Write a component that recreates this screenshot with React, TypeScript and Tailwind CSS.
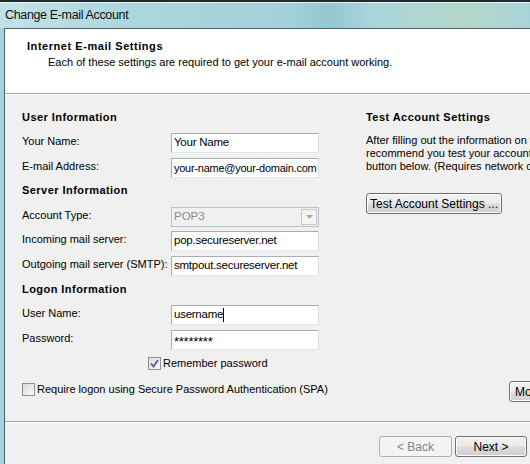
import { ReactNode } from "react";

const font = "font-['Liberation_Sans',Arial,sans-serif]";

function Field({ label, children, className = "" }: { label: string; children: ReactNode; className?: string }) {
  return (
    <div className={`flex items-center h-[20px] ${className}`}>
      <span className="w-[149px] shrink-0 pb-[4px] text-[11px] leading-[14px]">{label}</span>
      {children}
    </div>
  );
}

function TextBox({ value, caret, className = "" }: { value: string; caret?: boolean; className?: string }) {
  return (
    <div
      className={`w-[148px] h-[20px] shrink-0 bg-white border border-[#abadb3] border-b-[#e3e9ef] border-r-[#dbdfe6] flex items-center px-[2px] text-[11.5px] tracking-[-0.25px] overflow-hidden whitespace-nowrap ${className}`}
    >
      {value}
      {caret && <span className="inline-block w-px h-[14px] bg-black" />}
    </div>
  );
}

function SectionTitle({ children, className = "" }: { children: ReactNode; className?: string }) {
  return <div className={`h-[14px] text-[11px] leading-[14px] font-bold tracking-[0.45px] whitespace-nowrap ${className}`}>{children}</div>;
}

function CheckBox({ checked }: { checked?: boolean }) {
  return (
    <span className="w-[13px] h-[13px] border border-[#8e8f8f] bg-gradient-to-br from-[#dcdcdc] to-[#f8f8f8] flex items-center justify-center shrink-0">
      {checked && (
        <svg width="9" height="9" viewBox="0 0 9 9">
          <path d="M1 4.5 L3.5 7.5 L8 1" fill="none" stroke="#4a5f97" strokeWidth="1.8" />
        </svg>
      )}
    </span>
  );
}

function Button({ children, className = "" }: { children: ReactNode; className?: string }) {
  return (
    <div
      className={`h-[21px] shrink-0 rounded-[3px] border border-[#707070] bg-[linear-gradient(#f2f2f2_0%,#ebebeb_48%,#dddddd_52%,#cfcfcf_100%)] flex items-center justify-center text-[12px] shadow-[inset_0_0_0_1px_#fcfcfc] whitespace-nowrap ${className}`}
    >
      {children}
    </div>
  );
}

export default function App() {
  return (
    <div className={`w-[530px] h-[464px] overflow-hidden flex flex-col bg-[#a6d3db] text-black ${font}`}>
      {/* window title bar */}
      <div className="h-[2px] shrink-0 bg-[#222a2c]" />
      <div className="h-[26px] shrink-0 border-t border-[#e4f3f5] bg-[linear-gradient(90deg,#c2e2e7_0%,#abd6dd_25%,#a2d1d9_55%,#93c7d1_62%,#a9d4db_70%,#b3d7c8_88%,#a9d3d9_100%)] flex items-center pl-[5px] text-[12.5px] tracking-[-0.35px] text-[#111]">
        Change E-mail Account
      </div>

      <div className="flex-1 flex min-h-0">
        <div className="w-[4px] shrink-0 bg-[#a6d2da]" />
        <div className="flex-1 min-w-0 flex flex-col border-t border-l border-[#4d6268] bg-[#f0f0f0]">
          {/* header */}
          <div className="h-[64px] shrink-0 bg-white pl-[22px] pt-[10px] whitespace-nowrap">
            <div className="text-[11px] font-bold tracking-[0.55px] leading-[14px]">Internet E-mail Settings</div>
            <div className="text-[11px] leading-[14px] pl-[21px] mt-[2px]">
              Each of these settings are required to get your e-mail account working.
            </div>
          </div>
          <div className="h-px shrink-0 bg-[#a0a0a0]" />
          <div className="h-px shrink-0 bg-white" />

          {/* body */}
          <div className="h-[326px] shrink-0 flex pl-[17px] pt-[15px] text-[11px]">
            <div className="w-[327px] shrink-0 flex flex-col">
              <SectionTitle>User Information</SectionTitle>
              <Field label="Your Name:" className="mt-[9px]">
                <TextBox value="Your Name" />
              </Field>
              <Field label="E-mail Address:" className="mt-[5px]">
                <TextBox value="your-name@your-domain.com" className="text-[11px] tracking-[-0.4px]" />
              </Field>
              <SectionTitle className="mt-[5px]">Server Information</SectionTitle>
              <Field label="Account Type:" className="mt-[10px]">
                <div className="w-[148px] h-[20px] shrink-0 border border-[#b5c2cf] bg-[#f0f0f0] flex items-center text-[#8b8b8b] text-[11.5px]">
                  <span className="flex-1 pl-[2px]">POP3</span>
                  <span className="w-[16px] h-[16px] mr-[1px] border border-[#c8c8c8] bg-[#f4f4f4] flex items-center justify-center">
                    <svg width="7" height="4" viewBox="0 0 7 4">
                      <path d="M0 0 H7 L3.5 4 Z" fill="#a8a8a8" />
                    </svg>
                  </span>
                </div>
              </Field>
              <Field label="Incoming mail server:" className="mt-[4px]">
                <TextBox value="pop.secureserver.net" />
              </Field>
              <Field label="Outgoing mail server (SMTP):" className="mt-[5px]">
                <TextBox value="smtpout.secureserver.net" />
              </Field>
              <SectionTitle className="mt-[6px]">Logon Information</SectionTitle>
              <Field label="User Name:" className="mt-[9px]">
                <TextBox value="username" caret />
              </Field>
              <Field label="Password:" className="mt-[5px]">
                <TextBox value="********" className="text-[13px] tracking-[-0.6px] items-start pt-[1px]" />
              </Field>
              <div className="flex items-center gap-[2px] h-[14px] mt-[6px] pl-[126px]">
                <CheckBox checked />
                <span className="text-[11px] leading-[14px]">Remember password</span>
              </div>
              <div className="flex items-center gap-[2px] h-[14px] mt-[12px]">
                <CheckBox />
                <span className="text-[11px] leading-[14px] whitespace-nowrap">
                  Require logon using Secure Password Authentication (SPA)
                </span>
              </div>
            </div>

            <div className="flex-1 min-w-0 flex flex-col pl-[17px] overflow-hidden">
              <SectionTitle>Test Account Settings</SectionTitle>
              <div className="mt-[10px] text-[11px] leading-[13px] whitespace-nowrap">
                <div>After filling out the information on this screen, we</div>
                <div>recommend you test your account by clicking the</div>
                <div>button below. (Requires network connection)</div>
              </div>
              <Button className="w-[136px] mt-[20px] text-[11.5px]">Test Account Settings ...</Button>
              <Button className="w-[90px] mt-[167px] ml-[143px] justify-start pl-[5px] text-[11.5px]">More Settings ...</Button>
            </div>
          </div>

          <div className="h-px shrink-0 bg-[#a0a0a0]" />
          <div className="h-px shrink-0 bg-white" />

          {/* footer */}
          <div className="flex-1 flex pt-[13px] pl-[374px] gap-[3px]">
            <div className="w-[73px] h-[21px] shrink-0 rounded-[3px] border border-[#adb2b5] bg-[#f4f4f4] flex items-center justify-center text-[12px] text-[#838383]">
              &lt; Back
            </div>
            <Button className="w-[72px] border-[#3c7fb1] shadow-[inset_0_0_0_1px_#7fd4f5,inset_0_0_0_2px_#c4ecfb]">
              Next &gt;
            </Button>
          </div>
        </div>
      </div>
    </div>
  );
}
